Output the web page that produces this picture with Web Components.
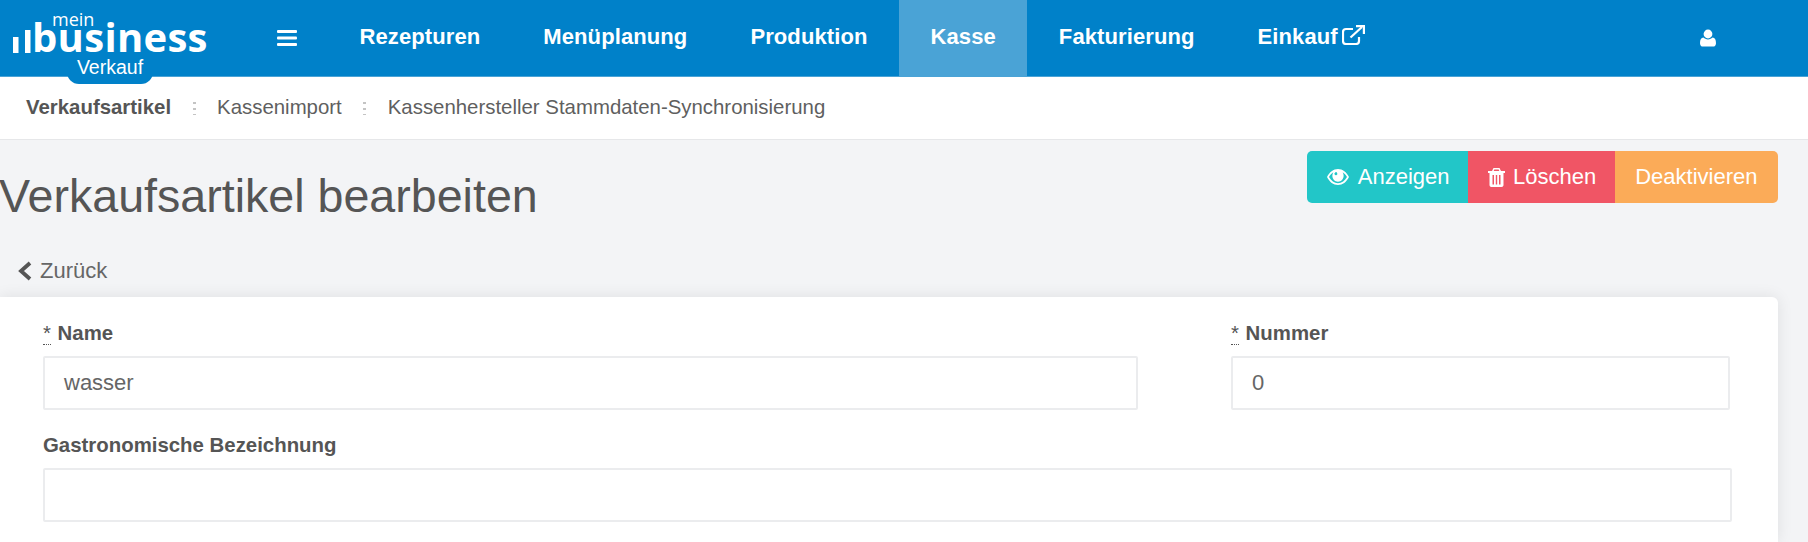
<!DOCTYPE html>
<html lang="de">
<head>
<meta charset="utf-8">
<title>Verkaufsartikel bearbeiten</title>
<style>
html, body { margin: 0; padding: 0; }
body {
    width: 1808px;
    height: 542px;
    overflow: hidden;
    background: #f3f4f6;
    font-family: "Liberation Sans", Arial, sans-serif;
    color: #555;
}
</style>
</head>
<body>
<app-header>
    <nav-item>Rezepturen</nav-item>
    <nav-item>Menüplanung</nav-item>
    <nav-item>Produktion</nav-item>
    <nav-item active>Kasse</nav-item>
    <nav-item>Fakturierung</nav-item>
    <nav-item external>Einkauf</nav-item>
</app-header>
<sub-nav>
    <sub-link strong>Verkaufsartikel</sub-link>
    <sub-link>Kassenimport</sub-link>
    <sub-link>Kassenhersteller Stammdaten-Synchronisierung</sub-link>
</sub-nav>
<page-head>
    <action-button color="#22c6c8" icon="eye">Anzeigen</action-button>
    <action-button color="#f05565" icon="trash">Löschen</action-button>
    <action-button color="#fbab58">Deaktivieren</action-button>
</page-head>
<back-link>Zurück</back-link>
<form-card>
    <form-field required label="Name" value="wasser"></form-field>
    <form-field required label="Nummer" value="0"></form-field>
    <form-field wide label="Gastronomische Bezeichnung"></form-field>
</form-card>

<script>
class AppHeader extends HTMLElement {
    constructor() {
        super();
        this.attachShadow({ mode: "open" });
        this.shadowRoot.innerHTML = `
<style>
:host {
    display: flex;
    align-items: stretch;
    height: 76px;
    background: #0081c9;
    border-bottom: 1px solid #4aa3d6;
    color: #fff;
}
.logo {
    position: relative;
    flex: none;
    width: 255px;
    height: 76px;
    color: #fff;
    font-family: "Open Sans", sans-serif;
}
.logo svg { position: absolute; left: 13px; top: 37px; }
.mein {
    position: absolute;
    left: 52px;
    top: 9px;
    font-size: 18px;
    line-height: 20px;
}
.word {
    position: absolute;
    left: 32px;
    top: 11px;
    font-size: 40px;
    line-height: 52px;
    font-weight: 700;
    letter-spacing: 0.3px;
}
.tab {
    position: absolute;
    left: 67px;
    top: 56px;
    width: 86px;
    height: 28px;
    border-radius: 0 0 12px 12px;
    background: #0081c9;
    font-family: "Liberation Sans", sans-serif;
    font-size: 19.500px;
    line-height: 22px;
    text-align: center;
}
.toggle {
    flex: none;
    width: 20px;
    margin: 0 31px 0 22px;
    display: flex;
    align-items: center;
}
.items { display: flex; flex: 1; }
.user {
    flex: none;
    width: 16px;
    margin-right: 92px;
    display: flex;
    align-items: center;
}
</style>
<div class="logo">
    <svg width="18" height="16" viewBox="0 0 18 16" fill="#fff">
        <rect x="0" y="0" width="5.500" height="16"/>
    </svg>
    <svg style="left:25px;top:30px" width="6" height="23" viewBox="0 0 6 23" fill="#fff">
        <rect x="0" y="0" width="5.500" height="23"/>
    </svg>
    <span class="mein">mein</span>
    <span class="word">business</span>
    <div class="tab">Verkauf</div>
</div>
<div class="toggle">
    <svg width="20" height="16" viewBox="0 0 20 16" fill="#fff">
        <rect width="20" height="3" y="0" rx="1"/>
        <rect width="20" height="3" y="6.500" rx="1"/>
        <rect width="20" height="3" y="13" rx="1"/>
    </svg>
</div>
<div class="items"><slot></slot></div>
<div class="user">
    <svg width="16" height="18" viewBox="0 0 16 18" fill="#fff">
        <circle cx="8" cy="5" r="4.400"/>
        <path d="M3.400 8.600C4.600 9.800 6.200 10.400 8 10.400s3.400-.6 4.600-1.800c2.200.2 3.400 2.200 3.400 5.600 0 2-1.200 3.400-3 3.400H3c-1.800 0-3-1.400-3-3.400 0-3.400 1.200-5.400 3.400-5.600z"/>
    </svg>
</div>`;
    }
}
customElements.define("app-header", AppHeader);

class NavItem extends HTMLElement {
    constructor() {
        super();
        this.attachShadow({ mode: "open" });
        this.shadowRoot.innerHTML = `
<style>
:host {
    display: flex;
    align-items: center;
    padding: 0 31.500px;
    padding-bottom: 2px;
    font-size: 22px;
    font-weight: 700;
    letter-spacing: 0.1px;
    color: #fff;
}
:host([active]) { background: #4aa3d6; }
svg { display: none; margin: -5px 0 0 4px; }
:host([external]) svg { display: block; }
</style>
<slot></slot>
<svg width="23" height="20" viewBox="0 0 23 20" fill="none" stroke="#fff" stroke-width="2.200">
    <path d="M17 12v4a3 3 0 0 1-3 3H4a3 3 0 0 1-3-3V7a3 3 0 0 1 3-3h7"/>
    <path d="M8.500 12.500L20 2"/>
    <path d="M14 1.100h7.900V9"/>
</svg>`;
    }
}
customElements.define("nav-item", NavItem);

class SubNav extends HTMLElement {
    constructor() {
        super();
        this.attachShadow({ mode: "open" });
        this.shadowRoot.innerHTML = `
<style>
:host {
    display: flex;
    align-items: center;
    height: 63px;
    padding-left: 26px;
    padding-bottom: 2px;
    box-sizing: border-box;
    background: #fff;
    border-bottom: 1px solid #e6e7e9;
}
</style>
<slot></slot>`;
    }
}
customElements.define("sub-nav", SubNav);

class SubLink extends HTMLElement {
    constructor() {
        super();
        this.attachShadow({ mode: "open" });
        this.shadowRoot.innerHTML = `
<style>
:host {
    display: flex;
    align-items: center;
    font-size: 20.400px;
    color: #5f5f5f;
}
:host([strong]) { font-weight: 700; color: #555; }
:host(:not(:last-child))::after {
    content: "";
    width: 3px;
    height: 15px;
    margin: 0 21.500px;
    background: radial-gradient(circle at center, #c4c4c4 1.200px, transparent 1.400px) center top / 3px 6px repeat-y;
}
</style>
<slot></slot>`;
    }
}
customElements.define("sub-link", SubLink);

class PageHead extends HTMLElement {
    constructor() {
        super();
        this.attachShadow({ mode: "open" });
        this.shadowRoot.innerHTML = `
<style>
:host {
    display: flex;
    justify-content: space-between;
    align-items: flex-start;
    padding: 11px 30px 0 0;
    height: 106px;
    box-sizing: border-box;
}
h1 {
    margin: 20px 0 0 -1px;
    font-size: 46.600px;
    line-height: 50px;
    font-weight: 400;
    color: #555;
}
.group {
    display: flex;
    border-radius: 5px;
    overflow: hidden;
}
</style>
<h1>Verkaufsartikel bearbeiten</h1>
<div class="group"><slot></slot></div>`;
    }
}
customElements.define("page-head", PageHead);

const BUTTON_ICONS = {
    eye: `<svg style="margin-left:1px" width="22" height="16" viewBox="0 0 23 16" preserveAspectRatio="none"><path fill-rule="evenodd" fill="#fff" d="M11.500 0C6.600 0 2.600 3 0 8c2.600 5 6.600 8 11.500 8S20.400 13 23 8C20.400 3 16.400 0 11.500 0zM11.500 14.200C7.600 14.200 4.300 11.800 2.100 8 3.300 6 4.800 4.400 6.600 3.300 6 4.300 5.600 5.500 5.600 6.800c0 3.300 2.600 5.900 5.900 5.900s5.900-2.600 5.900-5.900c0-1.300-.4-2.500-1-3.500 1.800 1.100 3.300 2.700 4.500 4.700-2.200 3.800-5.500 6.200-9.400 6.200zM8 5.500a1.300 1.300 0 1 1 2.600-1.600A1.300 1.300 0 0 1 8 5.500z"/></svg>`,
    trash: `<svg width="17" height="19" viewBox="0 0 17 19"><path fill-rule="evenodd" fill="#fff" d="M5.500 0h6L13 3h4v2h-1.500v12c0 1.200-.8 2-2 2h-10c-1.200 0-2-.8-2-2V5H0V3h4zM6.300 1.500L5.700 3h5.600l-.6-1.500zM4.500 7v9.500H6V7zM7.800 7v9.500h1.400V7zM11 7v9.500h1.500V7z"/></svg>`
};

class ActionButton extends HTMLElement {
    constructor() {
        super();
        this.attachShadow({ mode: "open" });
    }
    connectedCallback() {
        const icon = BUTTON_ICONS[this.getAttribute("icon")] || "";
        const pad = icon ? "0 18.500px 0 19.500px" : "0 20.500px";
        this.shadowRoot.innerHTML = `
<style>
:host {
    display: flex;
    align-items: center;
    gap: 8.500px;
    height: 52px;
    padding: ${pad};
    background: ${this.getAttribute("color")};
    color: #fff;
    font-size: 22px;
}
</style>
${icon}<slot></slot>`;
    }
}
customElements.define("action-button", ActionButton);

class BackLink extends HTMLElement {
    constructor() {
        super();
        this.attachShadow({ mode: "open" });
        this.shadowRoot.innerHTML = `
<style>
:host {
    display: flex;
    align-items: center;
    gap: 8px;
    height: 51px;
    padding: 0 0 2px 17px;
    box-sizing: border-box;
    font-size: 22px;
    color: #666;
}
</style>
<svg width="15" height="20" viewBox="0 0 15 20" fill="none" stroke="#555" stroke-width="3.800">
    <path d="M13 2L4 10l9 8"/>
</svg>
<slot></slot>`;
    }
}
customElements.define("back-link", BackLink);

class FormCard extends HTMLElement {
    constructor() {
        super();
        this.attachShadow({ mode: "open" });
        this.shadowRoot.innerHTML = `
<style>
:host {
    display: grid;
    grid-template-columns: 1095px 499px;
    column-gap: 93px;
    row-gap: 20px;
    align-content: start;
    width: 1778px;
    height: 245px;
    padding: 21px 0 0 43px;
    box-sizing: border-box;
    background: #fff;
    border-radius: 0 6px 0 0;
    box-shadow: 0 0 16px rgba(0, 0, 0, 0.09);
}
::slotted([wide]) { grid-column: 1 / -1; margin-right: -2px; }
</style>
<slot></slot>`;
    }
}
customElements.define("form-card", FormCard);

class FormField extends HTMLElement {
    constructor() {
        super();
        this.attachShadow({ mode: "open" });
    }
    connectedCallback() {
        const mark = this.hasAttribute("required") ? `<abbr>*</abbr> ` : "";
        const value = this.getAttribute("value") || "";
        this.shadowRoot.innerHTML = `
<style>
:host { display: block; }
label {
    display: block;
    height: 38px;
    line-height: 30px;
    font-size: 20.400px;
    font-weight: 700;
    color: #555;
}
abbr {
    font-weight: 400;
    margin-right: 1px;
    border-bottom: 1px dotted #555;
}
.box {
    height: 54px;
    box-sizing: border-box;
    padding: 0 19px;
    line-height: 50px;
    font-size: 22px;
    color: #666;
    background: #fff;
    border: 2px solid #ebecee;
    border-radius: 2px;
}
</style>
<label>${mark}${this.getAttribute("label")}</label>
<div class="box">${value}</div>`;
    }
}
customElements.define("form-field", FormField);
</script>
</body>
</html>
